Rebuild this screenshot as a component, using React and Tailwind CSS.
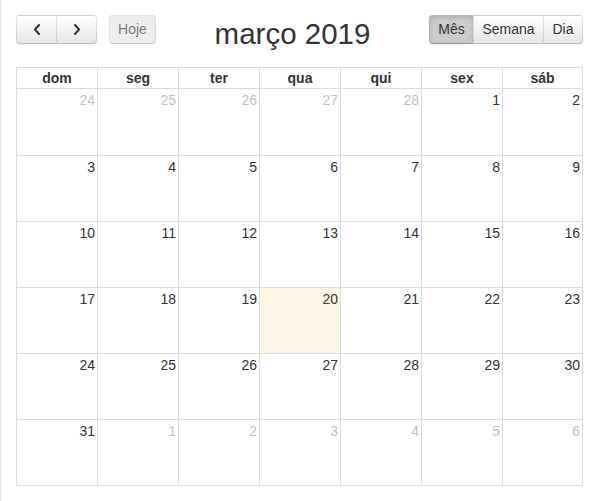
import React from "react";

const weeks = [
  [[24, 1], [25, 1], [26, 1], [27, 1], [28, 1], [1, 0], [2, 0]],
  [[3, 0], [4, 0], [5, 0], [6, 0], [7, 0], [8, 0], [9, 0]],
  [[10, 0], [11, 0], [12, 0], [13, 0], [14, 0], [15, 0], [16, 0]],
  [[17, 0], [18, 0], [19, 0], [20, 2], [21, 0], [22, 0], [23, 0]],
  [[24, 0], [25, 0], [26, 0], [27, 0], [28, 0], [29, 0], [30, 0]],
  [[31, 0], [1, 1], [2, 1], [3, 1], [4, 1], [5, 1], [6, 1]],
];

const days = ["dom", "seg", "ter", "qua", "qui", "sex", "sáb"];

const base =
  "h-[29px] px-[8px] border border-[rgba(0,0,0,0.1)] border-b-[rgba(0,0,0,0.25)] text-[14px] text-[#333] flex items-center justify-center";
const normal =
  "bg-linear-to-b from-white to-[#e6e6e6] shadow-[inset_0_1px_0_rgba(255,255,255,0.2),0_1px_2px_rgba(0,0,0,0.05)]";

function Chevron({ left }) {
  return (
    <svg width="8" height="11" viewBox="0 0 8 11" fill="none">
      <path
        d={left ? "M6 1 L2 5.5 L6 10" : "M2 1 L6 5.5 L2 10"}
        stroke="#333"
        strokeWidth="2"
        strokeLinecap="round"
        strokeLinejoin="round"
      />
    </svg>
  );
}

export default function App() {
  return (
    <div className="h-[501px] bg-white border-l border-[#e6e6e6] pl-[15px] pt-[15px] font-['Liberation_Sans',Arial,sans-serif] text-[14px] text-[#333]">
      <div className="w-[567px]">
        <div className="flex items-start justify-between h-[29px] mb-[23px]">
          <div className="flex items-start">
            <div className="flex">
              <button className={`${base} ${normal} w-[41px] rounded-l-[4px]`}>
                <Chevron left />
              </button>
              <button className={`${base} ${normal} w-[41px] -ml-px rounded-r-[4px]`}>
                <Chevron />
              </button>
            </div>
            <button className={`${base} ml-[12px] w-[47px] rounded-[4px] bg-[#e6e6e6] opacity-65 text-[#333]`}>
              Hoje
            </button>
          </div>
          <h2 className="mt-[4px] text-[29.5px] leading-[29px] text-[#333]">março 2019</h2>
          <div className="flex">
            <button className={`${base} w-[45px] rounded-l-[4px] bg-[#cccccc] shadow-[inset_0_2px_4px_rgba(0,0,0,0.15),0_1px_2px_rgba(0,0,0,0.05)]`}>
              Mês
            </button>
            <button className={`${base} ${normal} w-[71px] -ml-px`}>Semana</button>
            <button className={`${base} ${normal} w-[40px] -ml-px rounded-r-[4px]`}>Dia</button>
          </div>
        </div>

        <div className="grid grid-cols-[81px_81px_81px_81px_81px_81px_80px] border-l border-t border-[#ddd]">
          {days.map((d) => (
            <div
              key={d}
              className="h-[21px] border-r border-b border-[#ddd] text-center font-bold text-[14px] leading-[20px]"
            >
              {d}
            </div>
          ))}
          {weeks.map((w, wi) =>
            w.map(([n, t], di) => (
              <div
                key={`${wi}-${di}`}
                className={`${wi === 0 ? "h-[67px]" : "h-[66px]"} border-r border-b border-[#ddd] text-right pr-[2px] pt-[3px] leading-[16px] ${
                  t === 2 ? "bg-[#fcf8e3]" : ""
                }`}
              >
                <span className={t === 1 ? "opacity-30" : ""}>{n}</span>
              </div>
            ))
          )}
        </div>
      </div>
    </div>
  );
}
